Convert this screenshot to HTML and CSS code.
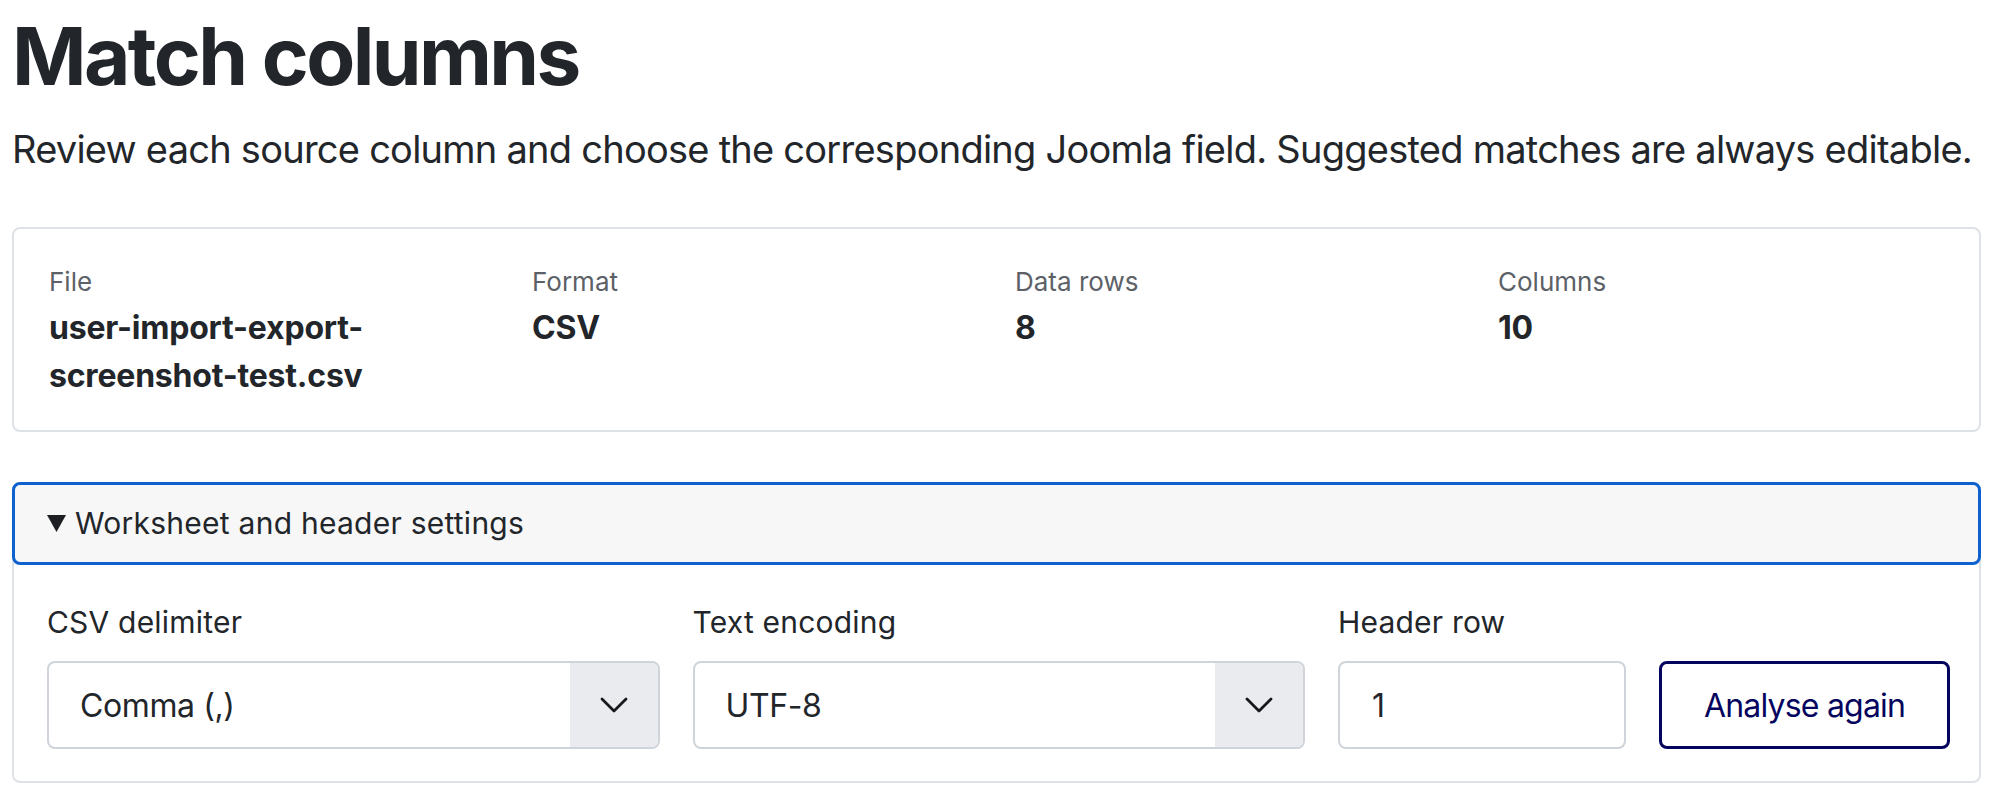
FILE: index.html
```html
<!DOCTYPE html>
<html lang="en">
<head>
<meta charset="utf-8">
<title>Match columns</title>
<link rel="stylesheet" href="styles.css">
</head>
<body>
<main class="page">
  <h1 class="title">Match columns</h1>
  <p class="lead">Review each source column and choose the corresponding Joomla field. Suggested matches are always editable.</p>

  <dl class="info">
    <div class="stat"><dt>File</dt><dd>user-import-export-screenshot-test.csv</dd></div>
    <div class="stat"><dt>Format</dt><dd>CSV</dd></div>
    <div class="stat"><dt>Data rows</dt><dd>8</dd></div>
    <div class="stat"><dt>Columns</dt><dd>10</dd></div>
  </dl>

  <details class="settings" open>
    <summary class="settings-head">
      <svg class="caret" width="19" height="17" viewBox="0 0 19 17"><polygon points="0,0 19,0 9.5,17" fill="#1d1f22"/></svg>
      <span>Worksheet and header settings</span>
    </summary>
    <div class="settings-body">
      <div class="field">
        <span class="field-label">CSV delimiter</span>
        <div class="select">
          <span class="select-value">Comma (,)</span>
          <span class="select-arrow"><svg width="28" height="16" viewBox="0 0 28 16"><polyline points="2,2 14,14 26,2" fill="none" stroke="#16181b" stroke-width="2.8" stroke-linecap="round" stroke-linejoin="round"/></svg></span>
        </div>
      </div>
      <div class="field">
        <span class="field-label">Text encoding</span>
        <div class="select">
          <span class="select-value">UTF-8</span>
          <span class="select-arrow"><svg width="28" height="16" viewBox="0 0 28 16"><polyline points="2,2 14,14 26,2" fill="none" stroke="#16181b" stroke-width="2.8" stroke-linecap="round" stroke-linejoin="round"/></svg></span>
        </div>
      </div>
      <div class="field">
        <span class="field-label">Header row</span>
        <div class="input">1</div>
      </div>
      <div class="field">
        <button class="btn" type="button">Analyse again</button>
      </div>
    </div>
  </details>
</main>
</body>
</html>
```
FILE: styles.css
```css
* { box-sizing: border-box; }

body {
  margin: 0;
  background: #ffffff;
  color: #22262a;
  font-family: Inter, "Noto Sans", "Liberation Sans", sans-serif;
}

.page {
  padding: 8px 11px 0 12px;
}

.title {
  margin: 0;
  font-size: 80px;
  line-height: 96px;
  font-weight: 700;
  letter-spacing: -2.6px;
  color: #22262a;
}

.lead {
  margin: 17px 0 0;
  font-size: 38px;
  line-height: 57px;
  letter-spacing: -0.75px;
  white-space: nowrap;
  color: #22262a;
}

.info {
  margin: 49px 0 0;
  border: 2px solid #dee2e6;
  border-radius: 8px;
  padding: 33px 35px 30px;
  display: grid;
  grid-template-columns: repeat(4, 1fr);
  column-gap: 37px;
}

.stat dt {
  font-size: 26px;
  line-height: 39px;
  color: #5c6167;
}

.stat dd {
  margin: 3px 0 0;
  font-size: 32px;
  line-height: 48px;
  font-weight: 700;
  letter-spacing: -0.2px;
  color: #22262a;
}

.settings {
  margin-top: 50px;
  border: 2px solid #dee2e6;
  border-radius: 8px;
}

.settings-head {
  margin: -2px -2px 0;
  border: 3px solid #0d62cf;
  border-radius: 8px;
  background: #f7f7f8;
  padding: 16px 30px 16px 32px;
  font-size: 30px;
  line-height: 45px;
  letter-spacing: 0.25px;
  display: flex;
  align-items: center;
  gap: 9px;
  list-style: none;
  cursor: pointer;
}

.settings-head::-webkit-details-marker { display: none; }

.caret { display: block; flex: none; }

.settings-body {
  display: grid;
  grid-template-columns: 1fr 1fr 288px 291px;
  column-gap: 33px;
  padding: 35px 29px 32px 33px;
  align-items: end;
}

.field {
  display: flex;
  flex-direction: column;
}

.field-label {
  font-size: 30px;
  line-height: 45px;
  letter-spacing: 0.2px;
  margin-bottom: 16px;
  color: #22262a;
}

.select,
.input {
  height: 88px;
  border: 2px solid #cfd4db;
  border-radius: 8px;
  background: #ffffff;
  display: flex;
  align-items: center;
  overflow: hidden;
  font-size: 32px;
  letter-spacing: -0.4px;
  color: #22262a;
}

.select-value {
  flex: 1;
  padding-left: 31px;
}

.select-arrow {
  width: 88px;
  align-self: stretch;
  background: #e9ebee;
  display: flex;
  align-items: center;
  justify-content: center;
}

.input {
  padding-left: 32px;
}

.btn {
  height: 88px;
  border: 3px solid #05055e;
  border-radius: 8px;
  background: #ffffff;
  color: #05055e;
  font-family: inherit;
  font-size: 32px;
  letter-spacing: -0.8px;
  padding: 0;
}
```
